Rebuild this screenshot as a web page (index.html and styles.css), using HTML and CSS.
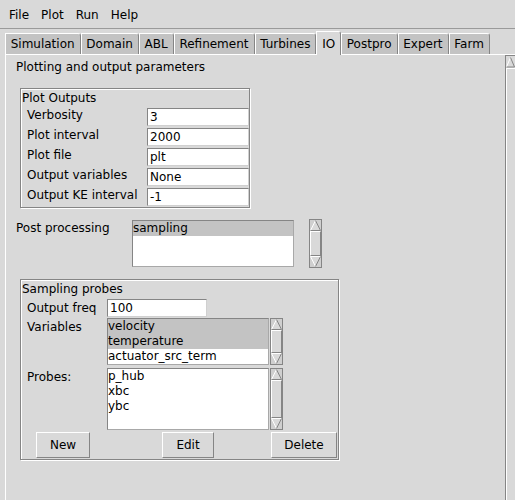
FILE: index.html
```html
<!DOCTYPE html>
<html>
<head>
<meta charset="utf-8">
<title>IO</title>
<link rel="stylesheet" href="styles.css">
</head>
<body>
<div class="menubar">
  <span class="menu">File</span><span class="menu">Plot</span><span class="menu">Run</span><span class="menu">Help</span>
</div>
<div class="tabs">
  <div class="tab">Simulation</div>
  <div class="tab">Domain</div>
  <div class="tab">ABL</div>
  <div class="tab">Refinement</div>
  <div class="tab">Turbines</div>
  <div class="tab sel">IO</div>
  <div class="tab">Postpro</div>
  <div class="tab">Expert</div>
  <div class="tab">Farm</div>
</div>
<div class="client">
  <div class="main">
    <div class="title">Plotting and output parameters</div>

    <div class="frame plot">
      <div class="flabel">Plot Outputs</div>
      <div class="pgrid">
        <div class="lbl">Verbosity</div><div class="entry">3</div>
        <div class="lbl">Plot interval</div><div class="entry">2000</div>
        <div class="lbl">Plot file</div><div class="entry">plt</div>
        <div class="lbl">Output variables</div><div class="entry">None</div>
        <div class="lbl">Output KE interval</div><div class="entry">-1</div>
      </div>
    </div>

    <div class="post">
      <div class="plbl">Post processing</div>
      <div class="listbox lb-post"><div class="item sel">sampling</div></div>
      <div class="sb sb-post">
        <svg class="arr" width="11" height="11" viewBox="0 0 11 11"><polygon points="0.5,10.5 5.5,0.5 10.5,10.5" fill="#d9d9d9"/><path d="M0.5 10.5 L5.5 0.5" stroke="#fff" fill="none"/><path d="M5.5 0.5 L10.5 10.5 L0.5 10.5" stroke="#858585" fill="none"/></svg>
        <div class="thumb"></div>
        <svg class="arr" width="11" height="11" viewBox="0 0 11 11"><polygon points="0.5,0.5 10.5,0.5 5.5,10.5" fill="#d9d9d9"/><path d="M10.5 0.5 L0.5 0.5 L5.5 10.5" stroke="#fff" fill="none"/><path d="M5.5 10.5 L10.5 0.5" stroke="#858585" fill="none"/></svg>
      </div>
    </div>

    <div class="frame samp">
      <div class="flabel">Sampling probes</div>
      <div class="sgrid">
        <div class="slbl mid">Output freq</div>
        <div class="cell"><div class="entry e-freq">100</div></div>
        <div class="cell"></div>

        <div class="slbl">Variables</div>
        <div class="cell"><div class="listbox lb-vars">
          <div class="item sel">velocity</div>
          <div class="item sel">temperature</div>
          <div class="item">actuator_src_term</div>
        </div></div>
        <div class="cell">
          <div class="sb sb-vars">
            <svg class="arr" width="11" height="11" viewBox="0 0 11 11"><polygon points="0.5,10.5 5.5,0.5 10.5,10.5" fill="#d9d9d9"/><path d="M0.5 10.5 L5.5 0.5" stroke="#fff" fill="none"/><path d="M5.5 0.5 L10.5 10.5 L0.5 10.5" stroke="#858585" fill="none"/></svg>
            <div class="thumb"></div>
            <svg class="arr" width="11" height="11" viewBox="0 0 11 11"><polygon points="0.5,0.5 10.5,0.5 5.5,10.5" fill="#d9d9d9"/><path d="M10.5 0.5 L0.5 0.5 L5.5 10.5" stroke="#fff" fill="none"/><path d="M5.5 10.5 L10.5 0.5" stroke="#858585" fill="none"/></svg>
          </div>
        </div>

        <div class="slbl">Probes:</div>
        <div class="cell"><div class="listbox lb-probes">
          <div class="item">p_hub</div>
          <div class="item">xbc</div>
          <div class="item">ybc</div>
        </div></div>
        <div class="cell">
          <div class="sb sb-probes">
            <svg class="arr" width="11" height="11" viewBox="0 0 11 11"><polygon points="0.5,10.5 5.5,0.5 10.5,10.5" fill="#d9d9d9"/><path d="M0.5 10.5 L5.5 0.5" stroke="#fff" fill="none"/><path d="M5.5 0.5 L10.5 10.5 L0.5 10.5" stroke="#858585" fill="none"/></svg>
            <div class="thumb"></div>
            <svg class="arr" width="11" height="11" viewBox="0 0 11 11"><polygon points="0.5,0.5 10.5,0.5 5.5,10.5" fill="#d9d9d9"/><path d="M10.5 0.5 L0.5 0.5 L5.5 10.5" stroke="#fff" fill="none"/><path d="M5.5 10.5 L10.5 0.5" stroke="#858585" fill="none"/></svg>
          </div>
        </div>

        <div class="cell"><button class="btn b-new">New</button></div>
        <div class="cell"><button class="btn b-edit">Edit</button></div>
        <div class="cell"><button class="btn b-del">Delete</button></div>
      </div>
    </div>
  </div>
  <div class="vscroll">
    <svg class="varr" width="13" height="12" viewBox="0 0 13 12"><polygon points="0.5,11 4.5,1.5 8.5,11" fill="#d9d9d9"/><path d="M0.5 11 L4.5 1.5" stroke="#fff" fill="none"/><path d="M4.5 1.5 L8.5 11 L0.5 11" stroke="#858585" fill="none"/></svg>
    <div class="vthumb"></div>
  </div>
</div>
</body>
</html>
```

FILE: styles.css
```css
html, body {
  margin: 0;
  padding: 0;
  overflow: hidden;
  background: #d9d9d9;
}

body {
  width: 515px;
  height: 500px;
  font-family: "DejaVu Sans", sans-serif;
  font-size: 12px;
  line-height: 15px;
  color: #000;
}

/* menu bar */
.menubar {
  display: flex;
  height: 15px;
  padding: 8px 0 5px 3px;
  border-bottom: 1px solid #9a9a9a;
}

.menu {
  padding: 0 6px;
}

/* notebook tabs */
.tabs {
  display: flex;
  align-items: flex-end;
  height: 25px;
  padding-left: 5px;
}

.tab {
  background: #c3c3c3;
  border: 1px solid;
  border-color: #fff #858585 transparent #fff;
  border-bottom: 0;
  border-top-right-radius: 3px;
  padding: 3px 5px 2px 4.7px;
  white-space: nowrap;
}

.tab.sel {
  background: #d9d9d9;
  padding-top: 5px;
  padding-bottom: 3px;
  margin-bottom: -1px;
  position: relative;
  z-index: 1;
}

/* notebook client area */
.client {
  display: flex;
  margin-left: 5px;
  width: 514px;
  height: 445px;
  border-top: 1px solid #fff;
  border-left: 1px solid #fff;
}

.main {
  flex: none;
  width: 499px;
  padding-top: 5px;
}

.title {
  padding-left: 10px;
}

/* groove frames */
.frame {
  box-sizing: border-box;
  margin-left: 14px;
  border: 1px solid #858585;
  box-shadow: inset 1px 1px 0 #fff, 1px 1px 0 #fff;
  padding: 2px 0 0 1px;
}

.flabel {
  margin-bottom: 1px;
}

.plot {
  width: 230px;
  margin-top: 13px;
  padding-top: 2px;
}

.pgrid {
  display: grid;
  grid-template-columns: 125px 102px;
  grid-auto-rows: 20px;
}

.lbl {
  padding: 1px 0 0 5px;
  white-space: nowrap;
}

.entry {
  box-sizing: border-box;
  height: 18px;
  margin: 1px 0;
  background: #fff;
  border: 1px solid;
  border-color: #858585 #d0d0d0 #d0d0d0 #858585;
  padding-left: 2px;
  line-height: 16px;
  white-space: nowrap;
}

/* post processing row */
.post {
  display: flex;
  align-items: flex-start;
  margin-top: 12px;
}

.plbl {
  width: 116px;
  padding: 1px 0 0 10px;
  white-space: nowrap;
}

.listbox {
  box-sizing: border-box;
  background: #fff;
  border: 1px solid;
  border-color: #858585 #a8a8a8 #a8a8a8 #858585;
  overflow: hidden;
}

.item {
  height: 15px;
  white-space: nowrap;
}

.item.sel {
  background: #c3c3c3;
}

.lb-post {
  width: 162px;
  height: 47px;
}

/* classic scrollbars */
.sb {
  box-sizing: border-box;
  width: 13px;
  display: flex;
  flex-direction: column;
  background: #cfcfcf;
  border: 1px solid #858585;
}

.sb .arr {
  display: block;
  flex: none;
}

.thumb {
  flex: 1;
  background: #d9d9d9;
  border: 1px solid;
  border-color: #fff #858585 #858585 #fff;
}

.sb-post {
  height: 49px;
  margin-left: 15px;
  margin-top: -1px;
}

.sb-vars {
  height: 47px;
}

.sb-probes {
  height: 62px;
}

/* sampling probes frame */
.samp {
  width: 319px;
  margin-top: 11px;
  padding-bottom: 1px;
}

.sgrid {
  display: grid;
  grid-template-columns: 85px 163px 68px;
  grid-template-rows: 20px 50px 64px 26px;
}

.slbl {
  padding: 2px 0 0 5px;
  white-space: nowrap;
}

.slbl.mid {
  padding-top: 2.5px;
}

.e-freq {
  width: 100px;
}

.lb-vars {
  width: 162px;
  height: 47px;
}

.lb-probes {
  width: 162px;
  height: 62px;
}

.btn {
  box-sizing: border-box;
  height: 26px;
  padding: 0;
  background: #d9d9d9;
  border: 1px solid;
  border-color: #fff #858585 #858585 #fff;
  font-family: "DejaVu Sans", sans-serif;
  font-size: 12px;
  line-height: 15px;
  color: #000;
}

.b-new {
  width: 54px;
  margin-left: 14px;
}

.b-edit {
  width: 52px;
  margin-left: 55px;
}

.b-del {
  width: 66px;
  margin-left: 1px;
}

/* main window scrollbar (partly off-screen) */
.vscroll {
  box-sizing: border-box;
  flex: none;
  width: 14px;
  display: flex;
  flex-direction: column;
  border-left: 1px solid #858585;
  border-top: 1px solid #858585;
}

.varr {
  display: block;
  flex: none;
}

.vthumb {
  flex: 1;
  background: #d9d9d9;
  border-top: 1px solid #fff;
  border-left: 1px solid #fff;
}
```
